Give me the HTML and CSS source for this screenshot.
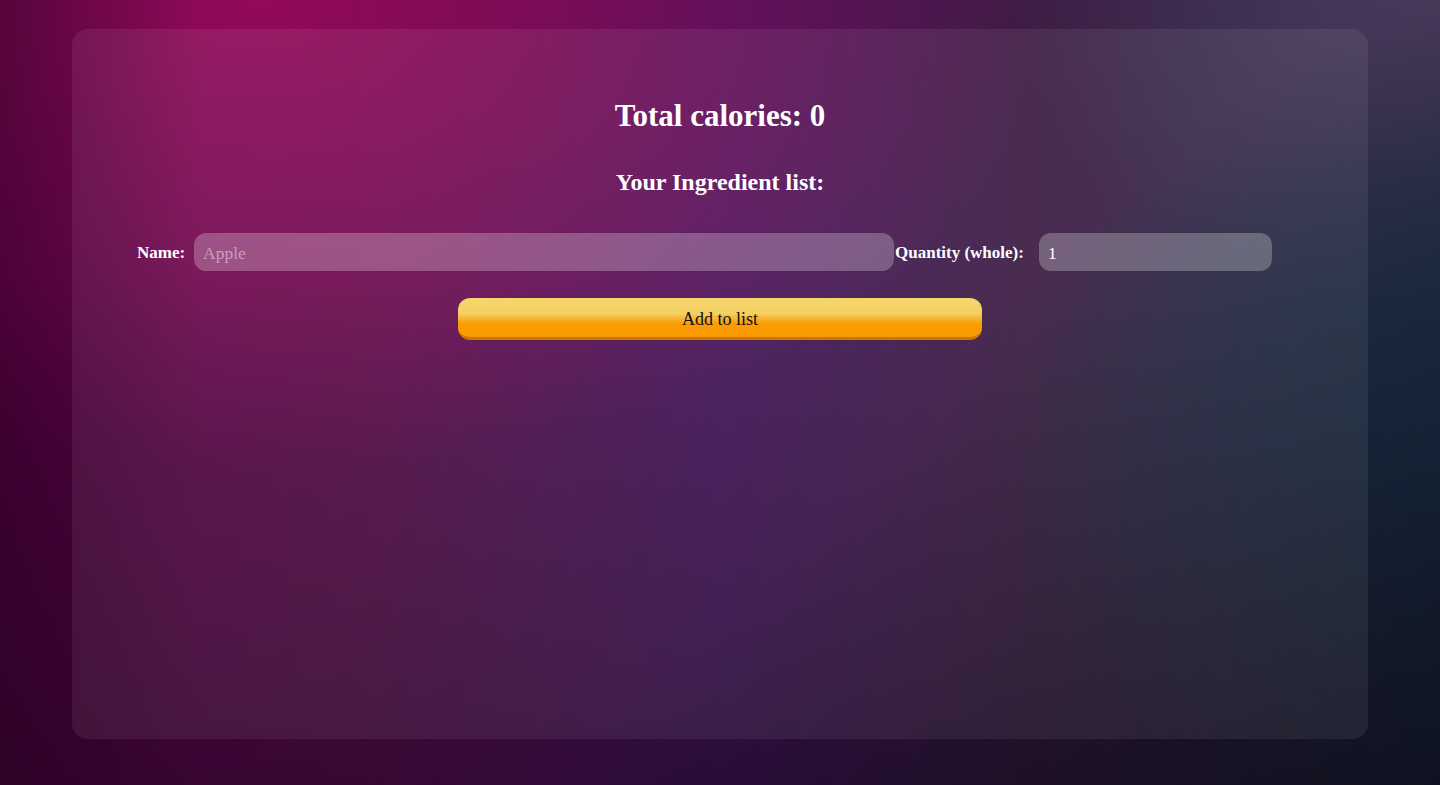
FILE: index.html
```html
<!DOCTYPE html>
<html lang="en">
<head>
<meta charset="utf-8">
<title>Calorie Counter</title>
<link rel="stylesheet" href="styles.css">
</head>
<body>
<main class="card">
  <h1 class="total">Total calories: 0</h1>
  <h2 class="list-title">Your Ingredient list:</h2>
  <form class="ingredient-form">
    <div class="fields">
      <label class="field-label label-name" for="name">Name:</label>
      <input class="field-input input-name" id="name" type="text" placeholder="Apple">
      <label class="field-label label-qty" for="qty">Quantity (whole):</label>
      <input class="field-input input-qty" id="qty" type="text" value="1">
    </div>
    <button class="add-btn" type="button">Add to list</button>
  </form>
</main>
</body>
</html>
```

FILE: styles.css
```css
* { box-sizing: border-box; }
html, body { height: 100%; }
body {
  margin: 0;
  font-family: "Liberation Serif", "Times New Roman", serif;
  color: #ffffff;
  background:
    linear-gradient(to right, rgba(30,0,25,0.42) 0%, rgba(30,0,25,0) 14%),
    linear-gradient(to bottom, rgba(8,4,16,0) 35%, rgba(8,4,16,0.4) 100%),
    linear-gradient(135deg, rgba(5,10,15,0) 60%, rgba(5,10,15,0.5) 100%),
    radial-gradient(ellipse 32% 45% at 100% 58%, rgba(28,52,78,0.95) 0%, rgba(28,52,78,0) 100%),
    radial-gradient(ellipse 30% 40% at 100% 0%, rgba(80,60,96,0.9) 0%, rgba(80,60,96,0) 100%),
    radial-gradient(ellipse 55% 60% at 18% 0%, rgba(146,10,90,1) 0%, rgba(146,10,90,0) 100%),
    linear-gradient(to right, #5c0046 0%, #580a48 25%, #44145c 50%, #3c1c42 72%, #232e46 100%);
  overflow: hidden;
}
.card {
  width: 1296px;
  height: 710px;
  margin: 29px auto 0;
  padding: 69px 65px 0;
  border-radius: 16px;
  background: rgba(255,255,255,0.07);
}
.total {
  margin: 0;
  text-align: center;
  font-size: 31px;
  font-weight: bold;
  line-height: 36px;
}
.list-title {
  margin: 34px 0 0;
  text-align: center;
  font-size: 24px;
  font-weight: bold;
  line-height: 28px;
}
.ingredient-form {
  display: flex;
  flex-direction: column;
  align-items: center;
  margin-top: 37px;
}
.fields {
  display: flex;
  align-items: center;
  align-self: flex-start;
  width: 1135px;
}
.field-label {
  font-size: 17px;
  font-weight: bold;
  white-space: nowrap;
  padding-top: 1px;
}
.label-name { width: 57px; }
.label-qty { width: 144px; margin-left: 1px; }
.field-input {
  height: 38px;
  border: none;
  border-radius: 12px;
  background: rgba(255,255,255,0.25);
  padding: 2px 9px 0;
  font-family: "Liberation Serif", "Times New Roman", serif;
  font-size: 17.5px;
  color: #ffffff;
  outline: none;
}
.field-input::placeholder { color: rgba(255,255,255,0.45); }
.input-name { width: 700px; }
.input-qty { width: 233px; }
.add-btn {
  margin-top: 27px;
  width: 524px;
  height: 42px;
  border: none;
  border-bottom: 3px solid #c77800;
  border-radius: 12px;
  background: linear-gradient(to bottom, #f6d66c 0%, #f4cf62 40%, #fa9c05 65%, #fa9a00 100%);
  font-family: "Liberation Serif", "Times New Roman", serif;
  font-size: 18px;
  color: #111111;
  cursor: pointer;
  padding: 3px 0 0;
}
```
